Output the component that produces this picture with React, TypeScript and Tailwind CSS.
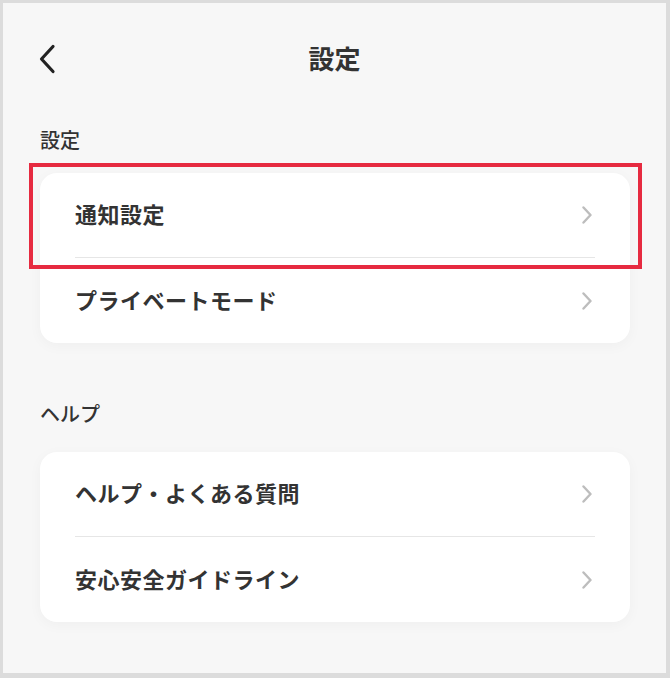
const font = { fontFamily: '"Noto Sans CJK JP", "Noto Sans", sans-serif' };

function Chevron() {
  return (
    <svg width="12" height="18" viewBox="0 0 12 18" fill="none" className="shrink-0">
      <path d="M2.5 1.5 L9.5 9 L2.5 16.5" stroke="#bdbdbd" strokeWidth="2.4" strokeLinecap="round" strokeLinejoin="round" />
    </svg>
  );
}

function Row({ label, divider }: { label: string; divider?: boolean }) {
  return (
    <div className="h-[85px] px-[35px]">
      <div className={`flex h-full items-center justify-between pr-[2px] ${divider ? "border-b border-[#e6e6e6]" : ""}`}>
        <span className="mb-[4px] text-[22px] font-bold leading-none tracking-[0.5px] text-[#333]">{label}</span>
        <Chevron />
      </div>
    </div>
  );
}

function Card({ items, highlight }: { items: string[]; highlight?: boolean }) {
  return (
    <div className="relative">
      <div className="overflow-hidden rounded-[17px] bg-white shadow-[0_3px_14px_rgba(0,0,0,0.035)]">
        {items.map((it, i) => (
          <Row key={it} label={it} divider={i < items.length - 1} />
        ))}
      </div>
      {highlight && (
        <div className="pointer-events-none absolute left-[-11px] top-[-10px] h-[106px] w-[613px] border-4 border-[#e62a40]" />
      )}
    </div>
  );
}

export default function App() {
  return (
    <div
      style={font}
      className="h-[678px] w-[670px] border-t-[3px] border-l-[3px] border-r-4 border-b-[5px] border-[#dcdcdc] bg-[#f7f7f7]"
    >
      <header className="relative flex h-[110px] items-center justify-center">
        <svg width="18" height="30" viewBox="0 0 18 30" fill="none" className="absolute left-[35px] top-[41px]">
          <path d="M15 2.5 L3.5 15 L15 27.5" stroke="#222" strokeWidth="3.2" strokeLinecap="round" strokeLinejoin="round" />
        </svg>
        <h1 className="text-[26px] font-bold leading-none text-[#333]">設定</h1>
      </header>

      <div className="pl-[37px] pr-[36px]">
        <h2 className="mt-[13px] h-[28px] text-[20px] font-medium leading-[28px] text-[#333]">設定</h2>
        <div className="mt-[19px]">
          <Card items={["通知設定", "プライベートモード"]} highlight />
        </div>

        <h2 className="mt-[57px] h-[28px] text-[20px] font-medium leading-[28px] text-[#333]">ヘルプ</h2>
        <div className="mt-[24px]">
          <Card items={["ヘルプ・よくある質問", "安心安全ガイドライン"]} />
        </div>
      </div>
    </div>
  );
}
